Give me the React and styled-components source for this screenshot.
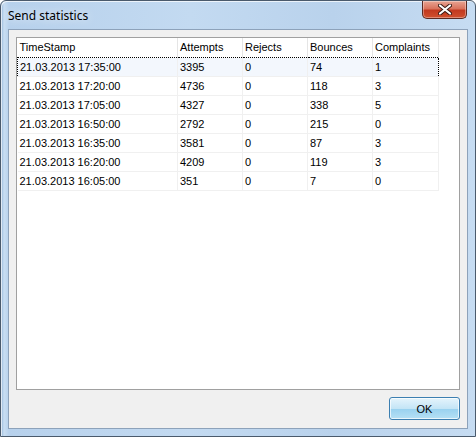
import styled, { createGlobalStyle } from "styled-components";

const GlobalStyle = createGlobalStyle`
  html, body {
    margin: 0;
    padding: 0;
    background: #ffffff;
  }
`;

const rows = [
  ["21.03.2013 17:35:00", "3395", "0", "74", "1"],
  ["21.03.2013 17:20:00", "4736", "0", "118", "3"],
  ["21.03.2013 17:05:00", "4327", "0", "338", "5"],
  ["21.03.2013 16:50:00", "2792", "0", "215", "0"],
  ["21.03.2013 16:35:00", "3581", "0", "87", "3"],
  ["21.03.2013 16:20:00", "4209", "0", "119", "3"],
  ["21.03.2013 16:05:00", "351", "0", "7", "0"],
];

const columns = [
  { title: "TimeStamp", width: 160 },
  { title: "Attempts", width: 65 },
  { title: "Rejects", width: 65 },
  { title: "Bounces", width: 65 },
  { title: "Complaints", width: 66 },
];

const App = () => {
  return (
    <>
      <GlobalStyle />
      <S.Window>
        <S.TitleBar>
          <S.Title>Send statistics</S.Title>
          <S.Close aria-label="close">
            <svg width="14" height="11" viewBox="0 0 14 11">
              <path
                d="M2 1.5 L12 9.5 M12 1.5 L2 9.5"
                stroke="#3a1a14"
                strokeWidth="4"
                strokeLinecap="round"
              />
              <path
                d="M2 1.5 L12 9.5 M12 1.5 L2 9.5"
                stroke="#ffffff"
                strokeWidth="2.2"
                strokeLinecap="round"
              />
            </svg>
          </S.Close>
        </S.TitleBar>
        <S.Client>
          <S.List>
            <S.Table>
              <colgroup>
                {columns.map((c) => (
                  <S.Col key={c.title} $w={c.width} />
                ))}
                <col />
              </colgroup>
              <thead>
                <tr>
                  {columns.map((c) => (
                    <S.Head key={c.title}>{c.title}</S.Head>
                  ))}
                  <S.Filler />
                </tr>
              </thead>
              <tbody>
                {rows.map((r, i) => (
                  <S.Row key={r[0]} $selected={i === 0}>
                    {r.map((v, j) => (
                      <S.Cell key={j}>{v}</S.Cell>
                    ))}
                    <S.Filler />
                  </S.Row>
                ))}
              </tbody>
            </S.Table>
          </S.List>
          <S.Footer>
            <S.Button>OK</S.Button>
          </S.Footer>
        </S.Client>
      </S.Window>
    </>
  );
};
export default App;

const Window = styled.div`
  width: 476px;
  height: 437px;
  box-sizing: border-box;
  display: flex;
  flex-direction: column;
  border: 1px solid #4a5a6c;
  border-radius: 6px 6px 0 0;
  background: linear-gradient(
    90deg,
    #8fb3d8 0px,
    #c9def2 3px,
    #b7d1ec 8px,
    #c3daf1 40%,
    #b9d2ec 70%,
    #c6dcf2 100%
  );
  box-shadow: inset 1px 1px 0 rgba(255, 255, 255, 0.7);
  overflow: hidden;
`;

const TitleBar = styled.div`
  height: 28px;
  display: flex;
  align-items: flex-start;
  justify-content: space-between;
  padding-left: 7px;
  flex-shrink: 0;
`;

const Title = styled.span`
  font-family: "Noto Sans", "Open Sans", sans-serif;
  font-size: 12px;
  color: #000000;
  margin-top: 6px;
  text-shadow: 0 0 8px rgba(255, 255, 255, 0.9);
`;

const Close = styled.div`
  width: 45px;
  height: 18px;
  margin-right: 8px;
  box-sizing: border-box;
  display: flex;
  align-items: center;
  justify-content: center;
  border: 1px solid #5b2a22;
  border-top: none;
  border-radius: 0 0 5px 5px;
  background: linear-gradient(
    180deg,
    #e8a493 0%,
    #d9735d 45%,
    #c2391f 55%,
    #d0502e 100%
  );
  box-shadow: inset 0 0 0 1px rgba(255, 255, 255, 0.35);
`;

const Client = styled.div`
  flex: 1;
  margin: 0 7px 7px 7px;
  background: #f0f0f0;
  border: 1px solid #8da2ba;
  display: flex;
  flex-direction: column;
  padding: 7px 7px 0 7px;
`;

const List = styled.div`
  height: 353px;
  box-sizing: border-box;
  border: 1px solid #a0a0a0;
  background: #ffffff;
  overflow: hidden;
`;

const Table = styled.table`
  border-collapse: collapse;
  table-layout: fixed;
  width: 100%;
  font-family: "Liberation Sans", Arial, sans-serif;
  font-size: 11px;
  color: #000000;
`;

const Col = styled.col`
  width: ${({ $w }) => $w}px;
`;

const Head = styled.th`
  height: 19px;
  padding: 0 0 0 2px;
  text-align: left;
  font-weight: normal;
  border-right: 1px solid #e5e5e5;
  white-space: nowrap;
  overflow: hidden;
  box-sizing: border-box;
`;

const Filler = styled.td`
  border: none;
`;

const Row = styled.tr`
  & > td:not(:last-child) {
    background: ${({ $selected }) => ($selected ? "#f3f7fd" : "transparent")};
    border-top: ${({ $selected }) =>
      $selected ? "1px dotted #000000" : "1px solid #f0f0f0"};
    border-bottom: ${({ $selected }) =>
      $selected ? "1px dotted #000000" : "1px solid #f0f0f0"};
  }
  & > td:first-child {
    border-left: ${({ $selected }) =>
      $selected ? "1px dotted #000000" : "none"};
  }
  & > td:nth-last-child(2) {
    border-right: ${({ $selected }) =>
      $selected ? "1px dotted #000000" : "1px solid #f0f0f0"};
  }
`;

const Cell = styled.td`
  height: 19px;
  padding: 0 0 0 2px;
  border-right: 1px solid #f0f0f0;
  white-space: nowrap;
  overflow: hidden;
  box-sizing: border-box;
`;

const Footer = styled.div`
  display: flex;
  justify-content: flex-end;
  padding-top: 7px;
`;

const Button = styled.button`
  width: 71px;
  height: 23px;
  box-sizing: border-box;
  border: 1px solid #3c7fb1;
  border-radius: 3px;
  background: linear-gradient(
    180deg,
    #e5f4fc 0%,
    #c4e5f6 50%,
    #98d1ef 51%,
    #b6e0f5 100%
  );
  box-shadow: inset 0 0 0 1px rgba(255, 255, 255, 0.7);
  font-family: "Liberation Sans", Arial, sans-serif;
  font-size: 11px;
  color: #000000;
  padding: 0;
`;

const S = {
  Window,
  TitleBar,
  Title,
  Close,
  Client,
  List,
  Table,
  Col,
  Head,
  Filler,
  Row,
  Cell,
  Footer,
  Button,
};
